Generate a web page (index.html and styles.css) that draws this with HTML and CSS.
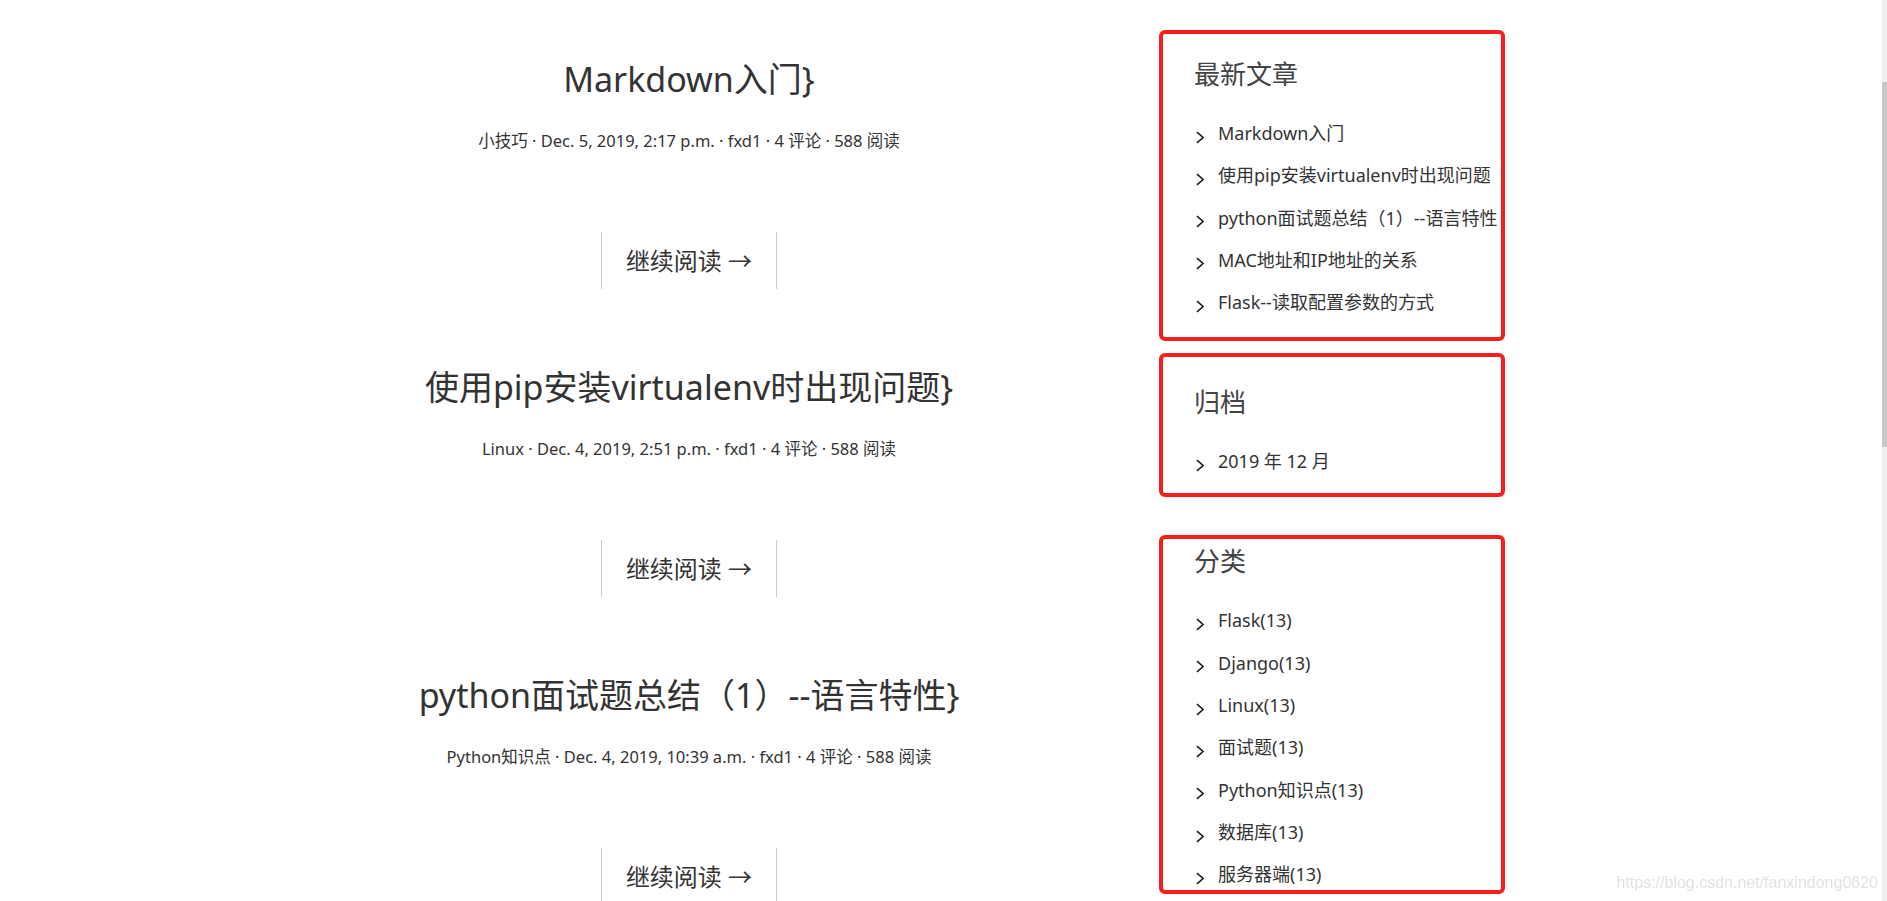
FILE: index.html
```html
<!DOCTYPE html>
<html lang="zh-CN">
<head>
<meta charset="utf-8">
<title>博客</title>
<link rel="stylesheet" href="styles.css">
</head>
<body>
<div class="page">
  <main class="posts">
    <article class="post">
      <h2 class="post-title">Markdown入门}</h2>
      <p class="post-meta">小技巧 · Dec. 5, 2019, 2:17 p.m. · fxd1 · 4 评论 · 588 阅读</p>
      <a class="more" href="#">继续阅读 →</a>
    </article>
    <article class="post">
      <h2 class="post-title">使用pip安装virtualenv时出现问题}</h2>
      <p class="post-meta">Linux · Dec. 4, 2019, 2:51 p.m. · fxd1 · 4 评论 · 588 阅读</p>
      <a class="more" href="#">继续阅读 →</a>
    </article>
    <article class="post">
      <h2 class="post-title">python面试题总结（1）--语言特性}</h2>
      <p class="post-meta">Python知识点 · Dec. 4, 2019, 10:39 a.m. · fxd1 · 4 评论 · 588 阅读</p>
      <a class="more" href="#">继续阅读 →</a>
    </article>
  </main>
  <aside class="sidebar">
    <section class="widget widget-recent">
      <h3 class="widget-title">最新文章</h3>
      <ul class="widget-list">
        <li><svg class="chev" viewBox="0 0 8 13"><path d="M1 1.2 L7 6.5 L1 11.8"/></svg><a href="#">Markdown入门</a></li>
        <li><svg class="chev" viewBox="0 0 8 13"><path d="M1 1.2 L7 6.5 L1 11.8"/></svg><a href="#">使用pip安装virtualenv时出现问题</a></li>
        <li><svg class="chev" viewBox="0 0 8 13"><path d="M1 1.2 L7 6.5 L1 11.8"/></svg><a href="#">python面试题总结（1）--语言特性</a></li>
        <li><svg class="chev" viewBox="0 0 8 13"><path d="M1 1.2 L7 6.5 L1 11.8"/></svg><a href="#">MAC地址和IP地址的关系</a></li>
        <li><svg class="chev" viewBox="0 0 8 13"><path d="M1 1.2 L7 6.5 L1 11.8"/></svg><a href="#">Flask--读取配置参数的方式</a></li>
      </ul>
    </section>
    <section class="widget widget-archive">
      <h3 class="widget-title">归档</h3>
      <ul class="widget-list">
        <li><svg class="chev" viewBox="0 0 8 13"><path d="M1 1.2 L7 6.5 L1 11.8"/></svg><a href="#">2019 年 12 月</a></li>
      </ul>
    </section>
    <section class="widget widget-category">
      <h3 class="widget-title">分类</h3>
      <ul class="widget-list">
        <li><svg class="chev" viewBox="0 0 8 13"><path d="M1 1.2 L7 6.5 L1 11.8"/></svg><a href="#">Flask(13)</a></li>
        <li><svg class="chev" viewBox="0 0 8 13"><path d="M1 1.2 L7 6.5 L1 11.8"/></svg><a href="#">Django(13)</a></li>
        <li><svg class="chev" viewBox="0 0 8 13"><path d="M1 1.2 L7 6.5 L1 11.8"/></svg><a href="#">Linux(13)</a></li>
        <li><svg class="chev" viewBox="0 0 8 13"><path d="M1 1.2 L7 6.5 L1 11.8"/></svg><a href="#">面试题(13)</a></li>
        <li><svg class="chev" viewBox="0 0 8 13"><path d="M1 1.2 L7 6.5 L1 11.8"/></svg><a href="#">Python知识点(13)</a></li>
        <li><svg class="chev" viewBox="0 0 8 13"><path d="M1 1.2 L7 6.5 L1 11.8"/></svg><a href="#">数据库(13)</a></li>
        <li><svg class="chev" viewBox="0 0 8 13"><path d="M1 1.2 L7 6.5 L1 11.8"/></svg><a href="#">服务器端(13)</a></li>
      </ul>
    </section>
  </aside>
</div>
<div class="scrollbar"><div class="scrollbar-thumb"></div></div>
<div class="watermark">https://blog.csdn.net/fanxindong0620</div>
</body>
</html>
```

FILE: styles.css
```css
html, body {
  margin: 0;
  height: 100%;
  overflow: hidden;
  background: #fff;
}

body {
  font-family: "Noto Sans", "Noto Sans CJK SC", sans-serif;
  color: #333;
}

a {
  color: inherit;
  text-decoration: none;
}

.page {
  display: flex;
  align-items: flex-start;
  padding: 30px 0 0 374px;
}

/* ---- posts ---- */
.posts {
  width: 630px;
  padding-top: 27px;
}

.post {
  display: flex;
  flex-direction: column;
  align-items: center;
  text-align: center;
  margin-bottom: 76px;
}

.post-title {
  margin: 0 0 28px;
  font-size: 34px;
  font-weight: 400;
  line-height: 44px;
  color: #333;
  white-space: nowrap;
}

.post-meta {
  margin: 0 0 79px;
  font-size: 16.5px;
  line-height: 24px;
  color: #333;
  white-space: nowrap;
}

.more {
  display: block;
  padding: 12px 24px;
  font-size: 24px;
  line-height: 33px;
  color: #333;
  border-left: 1px solid #ccc;
  border-right: 1px solid #ccc;
}

/* ---- sidebar ---- */
.sidebar {
  margin-left: 155px;
  width: 346px;
  display: flex;
  flex-direction: column;
}

.widget {
  border: 4px solid #f5201b;
  border-radius: 6px;
  padding: 0 0 0 31px;
}

.widget-recent {
  padding-top: 23.5px;
  padding-bottom: 13px;
}

.widget-archive {
  margin-top: 12px;
  padding-top: 29px;
  padding-bottom: 11px;
}

.widget-category {
  margin-top: 38px;
  padding-top: 5.5px;
  height: 359px;
  box-sizing: border-box;
}

.widget-title {
  margin: 0 0 22.5px;
  font-size: 26px;
  font-weight: 400;
  line-height: 32px;
  color: #444;
}

.widget-list {
  list-style: none;
  margin: 0;
  padding: 0 0 0 2px;
}

.widget-list li {
  font-size: 18px;
  line-height: 42.33px;
  white-space: nowrap;
  color: #333;
}

.chev {
  width: 8px;
  height: 13px;
  margin-right: 14px;
  vertical-align: -3.5px;
  fill: none;
  stroke: #1e1e1e;
  stroke-width: 1.6;
}

/* ---- overlays ---- */
.scrollbar {
  position: fixed;
  top: 0;
  right: 0;
  width: 5px;
  height: 100%;
  background: #f0f0f0;
}

.scrollbar-thumb {
  margin-top: 82px;
  height: 365px;
  background: #c8c8c8;
}

.watermark {
  position: fixed;
  right: 9px;
  bottom: 9px;
  font-family: "Liberation Sans", Arial, sans-serif;
  font-size: 16px;
  line-height: 18px;
  color: #e2e2e2;
}
```
